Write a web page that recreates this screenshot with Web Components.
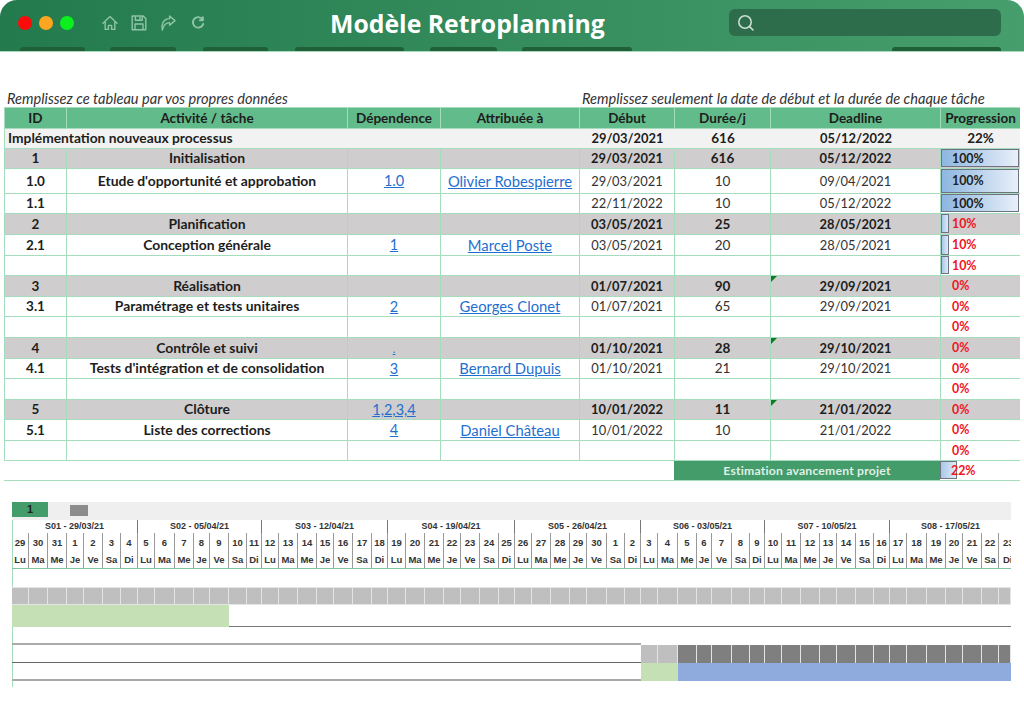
<!DOCTYPE html>
<html lang="fr">
<head>
<meta charset="utf-8">
<title>Modèle Retroplanning</title>
<style>
  html, body { margin: 0; background: #fff; }
  body { font-family: "Lato", "Liberation Sans", sans-serif; color: #222; width: 1024px; height: 712px; overflow: hidden; }
</style>
</head>
<body>
  <app-titlebar title-text="Modèle Retroplanning"></app-titlebar>
  <sheet-notes>
    <span slot="left">Remplissez ce tableau par vos propres données</span>
    <span slot="right">Remplissez seulement la date de début et la durée de chaque tâche</span>
  </sheet-notes>
  <plan-sheet>
    <plan-row kind="head" h="21" num="ID" label="Activité / tâche" dep="Dépendence" who="Attribuée à" start="Début" dur="Durée/j" end="Deadline" pct="Progression"></plan-row>
    <plan-row kind="main" h="20" label="Implémentation nouveaux processus" start="29/03/2021" dur="616" end="05/12/2022" pct="22%"></plan-row>
    <plan-row kind="group" h="20" num="1" label="Initialisation" start="29/03/2021" dur="616" end="05/12/2022" pct="100"></plan-row>
    <plan-row kind="task" h="25" num="1.0" label="Etude d'opportunité et approbation" dep="1.0" who="Olivier Robespierre" start="29/03/2021" dur="10" end="09/04/2021" pct="100"></plan-row>
    <plan-row kind="task" h="20" num="1.1" start="22/11/2022" dur="10" end="05/12/2022" pct="100"></plan-row>
    <plan-row kind="group" h="21" num="2" label="Planification" start="03/05/2021" dur="25" end="28/05/2021" pct="10"></plan-row>
    <plan-row kind="task" h="21" num="2.1" label="Conception générale" dep="1" who="Marcel Poste" start="03/05/2021" dur="20" end="28/05/2021" pct="10"></plan-row>
    <plan-row kind="task" h="20" pct="10"></plan-row>
    <plan-row kind="group" h="21" num="3" label="Réalisation" start="01/07/2021" dur="90" end="29/09/2021" pct="0" flag></plan-row>
    <plan-row kind="task" h="20" num="3.1" label="Paramétrage et tests unitaires" dep="2" who="Georges Clonet" start="01/07/2021" dur="65" end="29/09/2021" pct="0"></plan-row>
    <plan-row kind="task" h="21" pct="0"></plan-row>
    <plan-row kind="group" h="21" num="4" label="Contrôle et suivi" dep="." start="01/10/2021" dur="28" end="29/10/2021" pct="0" flag></plan-row>
    <plan-row kind="task" h="20" num="4.1" label="Tests d'intégration et de consolidation" dep="3" who="Bernard Dupuis" start="01/10/2021" dur="21" end="29/10/2021" pct="0"></plan-row>
    <plan-row kind="task" h="21" pct="0"></plan-row>
    <plan-row kind="group" h="20" num="5" label="Clôture" dep="1,2,3,4" start="10/01/2022" dur="11" end="21/01/2022" pct="0" flag></plan-row>
    <plan-row kind="task" h="21" num="5.1" label="Liste des corrections" dep="4" who="Daniel Château" start="10/01/2022" dur="10" end="21/01/2022" pct="0"></plan-row>
    <plan-row kind="task" h="20" pct="0"></plan-row>
    <plan-row kind="total" h="20" label="Estimation avancement projet" pct="22"></plan-row>
  </plan-sheet>
  <gantt-tabs></gantt-tabs>
  <gantt-chart></gantt-chart>

<script>
// Top bar with the window dots, quick icons, title and search box
class AppTitlebar extends HTMLElement {
  connectedCallback() {
    this.attachShadow({ mode: 'open' });
    this.shadowRoot.innerHTML = `
      <style>
        :host { display: block; height: 51px; border-bottom: 1px solid #a9d8bb; border-radius: 17px 17px 0 0;
          background: linear-gradient(90deg, #237a4d, #469e6d); overflow: hidden; }
        .top { display: grid; grid-template-columns: 330px 399px 272px; height: 47px; }
        .left { display: flex; align-items: center; padding-left: 18px; height: 46px; }
        .dot { width: 14px; height: 14px; border-radius: 50%; margin-right: 7px; }
        .icons { display: flex; align-items: center; gap: 13px; margin-left: 21px; }
        svg { display: block; fill: none; stroke: #8fc4a6; stroke-width: 1.4; stroke-linejoin: round; stroke-linecap: round; }
        h1 { margin: 0; font: 700 24.8px/46px "Open Sans", sans-serif; color: #fff; white-space: nowrap; }
        .search { display: flex; align-items: center; height: 27px; margin-top: 9px; padding-left: 8px;
          background: #2d6d4b; border-radius: 6px; }
        .search svg { stroke: #c9ddd0; stroke-width: 1.6; }
        .tabs { display: flex; height: 4px; }
        .tabs i { height: 4px; background: #1f6039; border-radius: 3px 3px 0 0; }
      </style>
      <div class="top">
        <div class="left">
          <span class="dot" style="background:#ff0a0a"></span>
          <span class="dot" style="background:#ffa51f"></span>
          <span class="dot" style="background:#0bf01e"></span>
          <div class="icons">
            <svg width="16" height="16" viewBox="0 0 16 16"><path d="M1 8.2 8 1.6l7 6.6M3.2 7v7.4h3.2v-4h3.2v4h3.2V7"/></svg>
            <svg width="16" height="16" viewBox="0 0 16 16"><path d="M1.2 1h11l2.6 2.6v11.2H1.2zM4.4 1v4.2h6.8V1M4 14.8V9h8v5.8M9 2.4v1.6"/></svg>
            <svg width="16" height="16" viewBox="0 0 16 16"><path d="M9.6 1 15 5.6l-5.4 4.6V7.6C6 7.6 3.6 9.6 2.4 15 1 9.6 3.2 3.8 9.6 3.6z"/></svg>
            <svg width="14" height="14" viewBox="0 0 16 16" style="stroke-width:2.2;margin-left:2px"><path d="M13 3.6A6 6 0 1 0 14 9M13.6 1.4v3.4h-3.4"/></svg>
          </div>
        </div>
        <h1>${this.getAttribute('title-text')}</h1>
        <div class="search">
          <svg width="18" height="18" viewBox="0 0 18 18"><circle cx="8" cy="8" r="6.2"/><path d="m12.6 12.6 3.4 3.4"/></svg>
        </div>
      </div>
      <div class="tabs">
        <i style="margin-left:20px;width:65px"></i>
        <i style="margin-left:25px;width:66px"></i>
        <i style="margin-left:27px;width:65px"></i>
        <i style="margin-left:27px;width:109px"></i>
        <i style="margin-left:26px;width:67px"></i>
        <i style="margin-left:25px;width:110px"></i>
        <i style="margin-left:260px;width:109px"></i>
      </div>`;
  }
}
customElements.define('app-titlebar', AppTitlebar);

class SheetNotes extends HTMLElement {
  constructor() {
    super();
    this.attachShadow({ mode: 'open' });
    this.shadowRoot.innerHTML = `
      <style>
        :host { display: grid; grid-template-columns: 575px 1fr; margin-top: 38px; padding-left: 7px; height: 17px;
          font: italic 14.6px/17px "Lato", sans-serif; color: #333; white-space: nowrap; }
      </style>
      <div><slot name="left"></slot></div>
      <div><slot name="right"></slot></div>`;
  }
}
customElements.define('sheet-notes', SheetNotes);

class PlanSheet extends HTMLElement {
  constructor() {
    super();
    this.attachShadow({ mode: 'open' });
    this.shadowRoot.innerHTML = `
      <style>
        :host { display: block; margin: 0 0 0 4px; width: 1016px; border-top: 1px solid #a5dcbd; }
      </style>
      <slot></slot>`;
  }
}
customElements.define('plan-sheet', PlanSheet);

// Bar + percentage of the last column
class ProgressCell extends HTMLElement {
  connectedCallback() {
    const value = +this.getAttribute('value');
    const bar = value === 100 ? 'right:1px' : value === 22 ? 'width:15px' : value === 10 ? 'width:6px' : 'display:none';
    this.attachShadow({ mode: 'open' });
    this.shadowRoot.innerHTML = `
      <style>
        :host { display: block; position: relative; height: 100%; min-width: 0; }
        .bar { position: absolute; left: 0; top: 0; bottom: 1px; border: 1px solid #6d7480; box-sizing: content-box;
          background: linear-gradient(90deg, #8db6e0, #e9f0f9); }
        .narrow { background: linear-gradient(90deg, #a9c8ea, #dfeaf7); }
        span { position: relative; display: block; padding-left: 11px; font-weight: 700; font-size: 12.4px; color: #f2141e;
          line-height: var(--lh); }
        .full { color: #222; }
      </style>
      <div class="bar ${value === 100 ? '' : 'narrow'}" style="${bar}"></div>
      <span class="${value === 100 ? 'full' : ''}">${value}%</span>`;
  }
}
customElements.define('progress-cell', ProgressCell);

class PlanRow extends HTMLElement {
  connectedCallback() {
    const a = n => this.getAttribute(n) || '';
    const kind = a('kind');
    const h = +a('h');
    const line = `${h - 1}px`;
    this.attachShadow({ mode: 'open' });
    const link = t => t ? `<a href="#">${t}</a>` : '';
    let cells;
    if (kind === 'main') {
      cells = `<div class="c lead" style="grid-column:span 4">${a('label')}</div>
        <div class="c date">${a('start')}</div><div class="c dur">${a('dur')}</div><div class="c date">${a('end')}</div><div class="c">${a('pct')}</div>`;
    } else if (kind === 'total') {
      cells = `<div style="grid-column:span 5"></div><div class="c est" style="grid-column:span 2">${a('label')}</div>
        <div class="p"><progress-cell value="${a('pct')}"></progress-cell></div>`;
    } else if (kind === 'head') {
      cells = ['num', 'label', 'dep', 'who', 'start', 'dur', 'end', 'pct'].map(n => `<div class="c">${a(n)}</div>`).join('');
    } else {
      cells = `<div class="c">${a('num')}</div><div class="c act">${a('label')}</div>
        <div class="c dep ${a('dep') === '.' ? 'dot' : ''}">${link(a('dep'))}</div><div class="c who">${link(a('who'))}</div>
        <div class="c date">${a('start')}</div><div class="c dur">${a('dur')}</div>
        <div class="c date">${this.hasAttribute('flag') ? '<b class="flag"></b>' : ''}${a('end')}</div>
        <div class="p"><progress-cell value="${a('pct')}"></progress-cell></div>`;
    }
    this.shadowRoot.innerHTML = `
      <style>
        :host { display: grid; grid-template-columns: 62px 281px 93px 139px 95px 96px 170px 79px; height: ${h}px;
          box-sizing: border-box; border-bottom: 1px solid #a5dcbd; --lh: ${line}; font: 700 13.5px/${line} "Lato", sans-serif;
          color: #1d1d1d; white-space: nowrap; }
        :host([kind=head]) { background: #62bb8a; border-left: 1px solid #a5dcbd; }
        :host([kind=main]) { background: #f2f2f2; border-left: 1px solid #a5dcbd; }
        :host([kind=group]) { background: #cfcdcd; }
        :host([kind=group]), :host([kind=task]) { border-left: 1px solid #a5dcbd; }
        .c { box-sizing: border-box; text-align: center; min-width: 0; border-right: 1px solid #a5dcbd; position: relative; }
        :host([kind=main]) .c { border-right: 0; }
        :host([kind=head]) .c:last-child { border-right: 0; }
        .c:first-child { margin-left: -1px; }
        .lead { text-align: left; padding-left: 3px; font-size: 13.8px; }
        .act { font-size: 13.9px; }
        /* the larger labels sit one pixel low in the short rows */
        :host([h="20"]) .act, .lead { line-height: ${h === 20 ? h - 3 : h - 1}px; }
        .date { font-size: 12.9px; }
        :host([kind=task]) .date, :host([kind=task]) .dur { font-weight: 400; color: #333; }
        .who a, .dep a { font-weight: 400; font-size: 14.8px; color: #1f6fd0; text-decoration: underline; }
        .dep a { font-size: 14.5px; }
        .dot a { font-size: 11px; }
        .p { min-width: 0; }
        .est { background: #459c6b; color: #dff1e6; font-size: 12.2px; letter-spacing: .2px; border-right: 0; }
        .flag { position: absolute; left: 0; top: 0; width: 6px; height: 6px; background: #0b7d23;
          clip-path: polygon(0 0, 100% 0, 0 100%); }
      </style>
      ${cells}`;
  }
}
customElements.define('plan-row', PlanRow);

class GanttTabs extends HTMLElement {
  constructor() {
    super();
    this.attachShadow({ mode: 'open' });
    this.shadowRoot.innerHTML = `
      <style>
        :host { display: flex; align-items: flex-start; margin: 21px 0 0 12px; width: 999px; height: 18px; background: #efefef;
          font: 700 11px/15px "Liberation Sans", sans-serif; color: #222; }
        .tab { width: 36px; height: 15px; background: #459c6b; text-align: center; }
        .thumb { width: 18px; height: 11px; margin: 3px 0 0 22px; background: #8c8c8c; }
      </style>
      <div class="tab">1</div><div class="thumb"></div>`;
  }
}
customElements.define('gantt-tabs', GanttTabs);

// Column edges of the 56 days, they are not regular in the sheet
const DAY_EDGES = [12,29,48,67,84,103,121,138,155,175,194,210,229,247,262,279,298,317,334,353,372,388,406,425,444,461,480,499,515,532,551,570,587,607,625,641,658,678,697,712,732,750,765,782,801,820,837,856,874,890,907,927,946,963,982,999,1011];
const WEEKS = ['S01 - 29/03/21','S02 - 05/04/21','S03 - 12/04/21','S04 - 19/04/21','S05 - 26/04/21','S06 - 03/05/21','S07 - 10/05/21','S08 - 17/05/21'];
const DAY_NAMES = ['Lu','Ma','Me','Je','Ve','Sa','Di'];

class GanttChart extends HTMLElement {
  connectedCallback() {
    this.attachShadow({ mode: 'open' });
    const cols = DAY_EDGES.slice(1).map((x, i) => (x - DAY_EDGES[i]) + 'px').join(' ');
    const first = new Date(Date.UTC(2021, 2, 29));
    const days = [...Array(56).keys()];
    const dateOf = i => new Date(first.getTime() + i * 86400000).getUTCDate();
    const shade = (from, to, cls) => days.slice(from, to).map(i => `<div class="cell ${cls}"></div>`).join('');
    this.shadowRoot.innerHTML = `
      <style>
        :host { display: block; margin-left: 12px; width: 999px; height: 167px; border-left: 1px solid #a5dcbd; box-sizing: border-box;
          font: 700 9.5px "Liberation Sans", sans-serif; color: #333; }
        .row { display: grid; grid-template-columns: ${cols}; margin-left: -1px; }
        .weeks { height: 13px; line-height: 13px; font-size: 9px; }
        .weeks div { grid-column: span 7; text-align: center; border-right: 1px solid #777; box-sizing: border-box; }
        .nums { height: 17px; line-height: 20px; }
        .names { height: 19px; line-height: 20px; border-bottom: 1px solid #7fc49c; box-sizing: border-box; }
        .nums div, .names div { text-align: center; border-right: 1px solid #999; box-sizing: border-box; overflow: hidden; white-space: nowrap; }
        .nums div:last-child, .names div:last-child { border-right: 0; text-align: left; padding-left: 4px; }
        .weeks div:last-child { border-right: 0; }
        .gap { height: 18px; }
        .cells { height: 18px; background: #e4e4e4; padding: 1px 0; box-sizing: border-box; }
        .cell { border-right: 1px solid #e4e4e4; background: #bfbfbf; box-sizing: border-box; }
        .cell.dark { background: #7f7f7f; }
        .bars { height: 22px; }
        .bars .green { grid-column: span 12; background: #c5e0b4; }
        .bars .rest { grid-column: span 44; border-bottom: 1px solid #777; }
        .blank { height: 18px; }
        .line-grey { grid-column: span 35; border-bottom: 2px solid #aaa; box-sizing: border-box; }
        .line-dark { grid-column: span 35; border-bottom: 1px solid #666; box-sizing: border-box; }
        .mix { height: 18px; }
        .plan { height: 18px; }
        .plan .green { grid-column: span 2; background: #c5e0b4; }
        .plan .blue { grid-column: span 19; background: #8faadc; }
      </style>
      <div class="row weeks">${WEEKS.map(w => `<div>${w}</div>`).join('')}</div>
      <div class="row nums">${days.map(i => `<div>${dateOf(i)}</div>`).join('')}</div>
      <div class="row names">${days.map(i => `<div>${DAY_NAMES[i % 7]}</div>`).join('')}</div>
      <div class="gap"></div>
      <div class="row cells">${shade(0, 56, '')}</div>
      <div class="row bars"><div class="green"></div><div class="rest"></div></div>
      <div class="row blank"><div class="line-grey"></div></div>
      <div class="row mix"><div class="line-dark"></div>${shade(35, 37, '')}${shade(37, 56, 'dark')}</div>
      <div class="row plan"><div class="line-grey"></div><div class="green"></div><div class="blue"></div></div>`;
  }
}
customElements.define('gantt-chart', GanttChart);
</script>
</body>
</html>
